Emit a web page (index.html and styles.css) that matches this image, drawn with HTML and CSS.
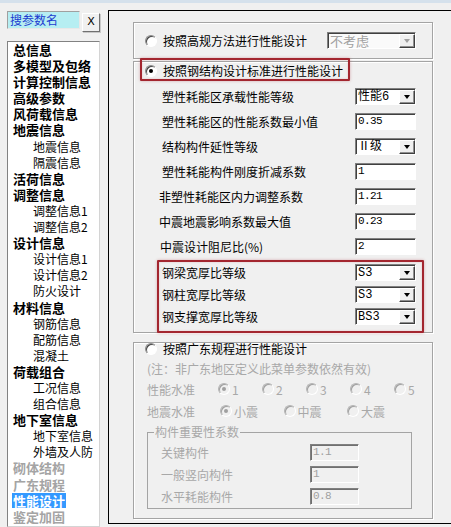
FILE: index.html
```html
<!DOCTYPE html>
<html lang="zh-CN">
<head>
    <meta charset="UTF-8">
    <meta name="viewport" content="width=device-width, initial-scale=1.0">
    <title>性能设计</title>
    <link rel="stylesheet" href="styles.css">
</head>
<body>
    <div class="window">
        <!-- 左侧参数树 -->
        <div class="side">
            <div class="search">
                <div class="search-box">搜参数名</div>
                <div class="btn-x">X</div>
            </div>
            <ul class="tree">
                <li class="top">总信息</li>
                <li class="top">多模型及包络</li>
                <li class="top">计算控制信息</li>
                <li class="top">高级参数</li>
                <li class="top">风荷载信息</li>
                <li class="top">地震信息</li>
                <li class="sub">地震信息</li>
                <li class="sub">隔震信息</li>
                <li class="top">活荷信息</li>
                <li class="top">调整信息</li>
                <li class="sub">调整信息1</li>
                <li class="sub">调整信息2</li>
                <li class="top">设计信息</li>
                <li class="sub">设计信息1</li>
                <li class="sub">设计信息2</li>
                <li class="sub">防火设计</li>
                <li class="top">材料信息</li>
                <li class="sub">钢筋信息</li>
                <li class="sub">配筋信息</li>
                <li class="sub">混凝土</li>
                <li class="top">荷载组合</li>
                <li class="sub">工况信息</li>
                <li class="sub">组合信息</li>
                <li class="top">地下室信息</li>
                <li class="sub">地下室信息</li>
                <li class="sub">外墙及人防</li>
                <li class="top off">砌体结构</li>
                <li class="top off">广东规程</li>
                <li class="top"><span class="sel">性能设计</span></li>
                <li class="top off">鉴定加固</li>
            </ul>
        </div>

        <!-- 右侧参数面板 -->
        <div class="pane">
            <div class="group g1">
                <span class="radio"></span>
                <span class="cap">按照高规方法进行性能设计</span>
                <div class="combo wide off"><span class="val">不考虑</span><span class="drop"></span></div>
            </div>

            <div class="group g2">
                <div class="head"><span class="radio on"></span><span class="cap">按照钢结构设计标准进行性能设计</span></div>
                <div class="rows">
                    <div class="row"><span class="label">塑性耗能区承载性能等级</span><div class="combo"><span class="val">性能6</span><span class="drop"></span></div></div>
                    <div class="row"><span class="label">塑性耗能区的性能系数最小值</span><div class="field">0.35</div></div>
                    <div class="row"><span class="label">结构构件延性等级</span><div class="combo"><span class="val">Ⅱ级</span><span class="drop"></span></div></div>
                    <div class="row"><span class="label">塑性耗能构件刚度折减系数</span><div class="field">1</div></div>
                    <div class="row"><span class="label nudge">非塑性耗能区内力调整系数</span><div class="field">1.21</div></div>
                    <div class="row"><span class="label nudge">中震地震影响系数最大值</span><div class="field">0.23</div></div>
                    <div class="row"><span class="label nudge2">中震设计阻尼比(%)</span><div class="field">2</div></div>
                    <div class="row s first"><span class="label">钢梁宽厚比等级</span><div class="combo"><span class="val">S3</span><span class="drop"></span></div></div>
                    <div class="row s"><span class="label">钢柱宽厚比等级</span><div class="combo"><span class="val">S3</span><span class="drop"></span></div></div>
                    <div class="row s"><span class="label">钢支撑宽厚比等级</span><div class="combo"><span class="val">BS3</span><span class="drop"></span></div></div>
                </div>
            </div>

            <div class="group g3">
                <div class="head small"><span class="radio"></span><span class="cap">按照广东规程进行性能设计</span></div>
                <div class="gd">
                    <div class="note">(注：非广东地区定义此菜单参数依然有效)</div>
                    <div class="level">
                        <span class="lv-label">性能水准</span>
                        <span class="opt"><span class="radio off on"></span>1</span>
                        <span class="opt"><span class="radio off"></span>2</span>
                        <span class="opt"><span class="radio off"></span>3</span>
                        <span class="opt"><span class="radio off"></span>4</span>
                        <span class="opt"><span class="radio off"></span>5</span>
                    </div>
                    <div class="level quake">
                        <span class="lv-label">地震水准</span>
                        <span class="opt"><span class="radio off on"></span>小震</span>
                        <span class="opt"><span class="radio off"></span>中震</span>
                        <span class="opt"><span class="radio off"></span>大震</span>
                    </div>
                    <fieldset class="factor">
                        <legend>构件重要性系数</legend>
                        <div class="krow first"><span class="klabel">关键构件</span><div class="field small off">1.1</div></div>
                        <div class="krow"><span class="klabel">一般竖向构件</span><div class="field small off">1</div></div>
                        <div class="krow"><span class="klabel">水平耗能构件</span><div class="field small off">0.8</div></div>
                    </fieldset>
                </div>
            </div>

            <!-- 红色标注框 -->
            <div class="mark mark-a"></div>
            <div class="mark mark-b"></div>
        </div>
    </div>
</body>
</html>
```

FILE: styles.css
```css
*{
    margin: 0;
    padding: 0;
    box-sizing: border-box;
}
body{
    width: 451px;
    height: 527px;
    overflow: hidden;
    background-color: #f0f0f0;
    font: 12px "Noto Sans CJK SC", sans-serif;
    color: #000;
}
.window{
    display: flex;
    height: 527px;
    border-top: 3px solid #d5e1ec;
}

/* 左侧 */
.side{
    width: 108px;
    flex: none;
    display: flex;
    flex-direction: column;
    padding: 8px 0 0 7px;
}
.search{
    display: flex;
    align-items: flex-start;
    gap: 2px;
    height: 30px;
    flex: none;
}
.search-box{
    width: 73px;
    height: 18px;
    line-height: 16px;
    padding-left: 2px;
    background-color: #b6eef2;
    border: 1px solid;
    border-color: #a0a0a0 #e8e8e8 #e8e8e8 #a0a0a0;
    color: #1c3bd0;
    font-size: 12px;
}
.btn-x{
    width: 18px;
    height: 19px;
    margin-top: 2px;
    line-height: 16px;
    text-align: center;
    font: 11px "DejaVu Sans", sans-serif;
    line-height: 16px;
    border: 1px solid;
    border-color: #fff #707070 #707070 #fff;
    box-shadow: 1px 1px 0 #c8c8c8;
}
.tree{
    width: 93px;
    flex: 1;
    list-style: none;
    background-color: #fff;
    border: 1px solid;
    border-color: #828282 #d4d4d4 #d4d4d4 #828282;
    overflow: hidden;
}
.tree li{
    line-height: 16.1px;
    height: 16.1px;
    white-space: nowrap;
}
.tree .top{
    padding-left: 5px;
    font-size: 13px;
    font-weight: bold;
}
.tree .sub{
    padding-left: 25px;
    font-size: 12px;
}
.tree .off{
    color: #a4a4a4;
}
.tree .sel{
    display: inline-block;
    margin-left: -1px;
    padding: 0 1px;
    line-height: 15px;
    background-color: #3399ff;
    color: #fff;
}

/* 右侧面板 */
.pane{
    flex: 1;
    position: relative;
    height: 514px;
    margin-top: 7px;
    padding: 11px 0 0 24px;
    border: 1px solid #000;
    border-right: none;
}
.group{
    width: 300px;
    border: 1px solid #a4a4a4;
    box-shadow: inset 1px 1px 0 #fff, 1px 1px 0 #fff;
}
.g1{
    height: 37px;
    display: flex;
    align-items: center;
    padding: 0 16px 0 11px;
}
.g2{
    height: 272px;
    margin-top: 2px;
    padding: 0 16px 0 11px;
}
.g3{
    height: 177px;
    margin-top: 9px;
    padding-left: 11px;
}
.cap{
    margin-left: 6px;
    white-space: nowrap;
}
.head{
    display: flex;
    align-items: center;
    height: 17px;
}
.head.small{
    height: 11px;
}
.rows{
    padding: 5px 0 0 17px;
}
.row{
    display: flex;
    align-items: center;
    justify-content: space-between;
    height: 25px;
}
.row.s{
    height: 22px;
}
.row.first{
    margin-top: 2px;
}
.label{
    white-space: nowrap;
}
.nudge{
    margin-left: -3px;
}
.nudge2{
    margin-left: -2px;
}

/* 单选按钮 */
.radio{
    position: relative;
    flex: none;
    width: 12px;
    height: 12px;
    border-radius: 50%;
    background-color: #fff;
    border: 1px solid;
    border-color: #8a8a8a #fff #fff #8a8a8a;
    box-shadow: inset 1px 1px 0 #444;
}
.radio.on::after{
    content: "";
    position: absolute;
    left: 3px;
    top: 3px;
    width: 4px;
    height: 4px;
    border-radius: 50%;
    background-color: #000;
}
.radio.off{
    background-color: #f0f0f0;
    border-color: #b4b4b4 #fff #fff #b4b4b4;
    box-shadow: inset 1px 1px 0 #a0a0a0;
}
.radio.off.on::after{
    background-color: #a0a0a0;
}

/* 输入框和下拉框 */
.field,
.combo{
    width: 61px;
    height: 17px;
    background-color: #fff;
    border: 1px solid;
    border-color: #808080 #fff #fff #808080;
    box-shadow: inset 1px 1px 0 #404040;
    font: 11px "Liberation Mono", "Noto Sans CJK SC", monospace;
    letter-spacing: -0.6px;
    line-height: 15px;
    padding-left: 2px;
    white-space: nowrap;
}
.combo{
    display: flex;
    justify-content: space-between;
    padding: 1px 0 0 2px;
    line-height: 14px;
}
.combo .val{
    font-size: 12px;
    letter-spacing: 0;
}
.combo.wide{
    width: 89px;
    margin-left: auto;
    background-color: #fafafa;
}
.combo.wide .val{
    font-family: "Noto Sans CJK SC", sans-serif;
    font-size: 13px;
}
.drop{
    position: relative;
    width: 16px;
    height: 14px;
    flex: none;
    background-color: #f0f0f0;
    border: 1px solid;
    border-color: #fff #404040 #404040 #fff;
    box-shadow: inset -1px -1px 0 #909090;
}
.drop::after{
    content: "";
    position: absolute;
    left: 4px;
    top: 4px;
    border-left: 3.5px solid transparent;
    border-right: 3.5px solid transparent;
    border-top: 4px solid #000;
}
.off{
    color: #a0a0a0;
}
.off .drop::after{
    border-top-color: #a0a0a0;
}
.field.off{
    background-color: #f0f0f0;
    box-shadow: inset 1px 1px 0 #707070;
}
.field.small{
    width: 49px;
}

/* 广东规程 */
.gd{
    padding-left: 2px;
    color: #a8a8a8;
}
.note{
    margin-top: 7px;
    line-height: 16px;
    white-space: nowrap;
}
.level{
    display: flex;
    align-items: center;
    height: 20px;
    margin-top: 2px;
}
.lv-label{
    width: 71px;
    flex: none;
}
.opt{
    display: flex;
    align-items: center;
    gap: 2px;
    width: 44px;
    flex: none;
}
.quake .lv-label{
    width: 73px;
}
.quake .opt{
    width: 63.5px;
}
.factor{
    width: 265px;
    margin-top: 4px;
    padding: 0 0 1px 6px;
    border: 1px solid #a4a4a4;
}
.factor legend{
    padding: 0 1px;
    line-height: 14px;
}
.krow{
    display: flex;
    align-items: center;
    height: 22px;
    padding-left: 7px;
}
.krow.first{
    margin-top: 2px;
}
.klabel{
    width: 149px;
    flex: none;
}

/* 红色标注框 */
.mark{
    position: absolute;
    border: 2px solid #a3262f;
    border-radius: 1px;
    box-shadow: 0 0 3px rgba(170, 40, 50, .35), inset 0 0 2px rgba(170, 40, 50, .25);
}
.mark-a{
    left: 31px;
    top: 47px;
    width: 210px;
    height: 23px;
}
.mark-b{
    left: 48px;
    top: 249px;
    width: 267px;
    height: 73px;
}
```
